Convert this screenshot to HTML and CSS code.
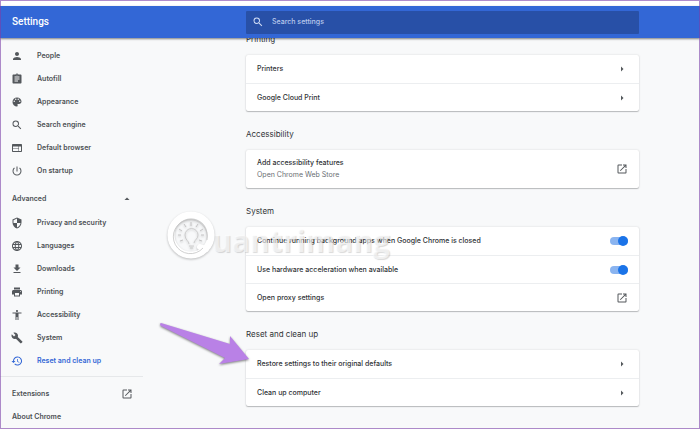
FILE: index.html
```html
<!DOCTYPE html>
<html lang="en">
<head>
    <meta charset="UTF-8">
    <meta name="viewport" content="width=device-width, initial-scale=1.0">
    <title>Settings</title>
    <link rel="stylesheet" href="styles.css">
</head>
<body>
    <svg class="sprite" aria-hidden="true">
        <symbol id="search" viewBox="0 0 24 24"><path d="M15.5 14h-.79l-.28-.27A6.47 6.47 0 0 0 16 9.5 6.5 6.5 0 1 0 9.5 16c1.61 0 3.09-.59 4.23-1.57l.27.28v.79l5 4.99L20.49 19l-4.99-5zm-6 0C7.01 14 5 11.99 5 9.5S7.01 5 9.5 5 14 7.01 14 9.5 11.99 14 9.5 14z"/></symbol>
        <symbol id="open" viewBox="0 0 24 24"><path d="M19 19H5V5h7V3H5a2 2 0 0 0-2 2v14a2 2 0 0 0 2 2h14c1.1 0 2-.9 2-2v-7h-2v7zM14 3v2h3.59l-9.83 9.83 1.41 1.41L19 6.41V10h2V3h-7z"/></symbol>
        <symbol id="right" viewBox="0 0 24 24"><path d="M10 7v10l5-5z"/></symbol>
    </svg>

    <header class="toolbar">
        <h1 class="title">Settings</h1>
        <label class="search">
            <svg class="icon"><use href="#search"/></svg>
            <input type="search" placeholder="Search settings" aria-label="Search settings">
        </label>
    </header>

    <div class="page">
        <nav class="sidebar">
            <a class="item" href="#people"><svg class="icon" viewBox="0 0 24 24"><path d="M12 12c2.21 0 4-1.79 4-4s-1.79-4-4-4-4 1.79-4 4 1.79 4 4 4zm0 2c-2.67 0-8 1.34-8 4v2h16v-2c0-2.66-5.33-4-8-4z"/></svg>People</a>
            <a class="item" href="#autofill"><svg class="icon" viewBox="0 0 24 24"><path d="M19 3h-4.18C14.4 1.84 13.3 1 12 1s-2.4.84-2.82 2H5c-1.1 0-2 .9-2 2v14c0 1.1.9 2 2 2h14c1.1 0 2-.9 2-2V5c0-1.1-.9-2-2-2zm-7 0c.55 0 1 .45 1 1s-.45 1-1 1-1-.45-1-1 .45-1 1-1zm2 14H7v-2h7v2zm3-4H7v-2h10v2zm0-4H7V7h10v2z"/></svg>Autofill</a>
            <a class="item" href="#appearance"><svg class="icon" viewBox="0 0 24 24"><path d="M12 3a9 9 0 0 0 0 18c.83 0 1.5-.67 1.5-1.5 0-.39-.15-.74-.39-1.01-.23-.26-.38-.61-.38-.99 0-.83.67-1.5 1.5-1.5H16c2.76 0 5-2.24 5-5 0-4.42-4.03-8-9-8zm-5.5 9c-.83 0-1.5-.67-1.5-1.5S5.67 9 6.5 9 8 9.67 8 10.5 7.33 12 6.5 12zm3-4C8.67 8 8 7.33 8 6.5S8.67 5 9.5 5s1.5.67 1.5 1.5S10.33 8 9.5 8zm5 0c-.83 0-1.5-.67-1.5-1.5S13.67 5 14.5 5s1.5.67 1.5 1.5S15.33 8 14.5 8zm3 4c-.83 0-1.5-.67-1.5-1.5S16.67 9 17.5 9s1.5.67 1.5 1.5-.67 1.5-1.5 1.5z"/></svg>Appearance</a>
            <a class="item" href="#engine"><svg class="icon"><use href="#search"/></svg>Search engine</a>
            <a class="item" href="#browser"><svg class="icon" viewBox="0 0 24 24"><path d="M20 4H4c-1.1 0-2 .9-2 2v12c0 1.1.9 2 2 2h16c1.1 0 2-.9 2-2V6c0-1.1-.9-2-2-2zm-5 14H4v-4h11v4zm0-5H4V9h11v4zm5 5h-4V9h4v9z"/></svg>Default browser</a>
            <a class="item" href="#startup"><svg class="icon" viewBox="0 0 24 24"><path d="M13 3h-2v10h2V3zm4.83 2.17l-1.42 1.42A6.92 6.92 0 0 1 19 12a7 7 0 1 1-11.42-5.42L6.17 5.17A8.93 8.93 0 0 0 3 12a9 9 0 0 0 18 0 8.93 8.93 0 0 0-3.17-6.83z"/></svg>On startup</a>

            <button class="advanced" type="button">Advanced <svg class="icon" viewBox="0 0 24 24"><path d="M7 14l5-5 5 5z"/></svg></button>

            <a class="item" href="#privacy"><svg class="icon" viewBox="0 0 24 24"><path d="M12 1L3 5v6c0 5.55 3.84 10.74 9 12 5.16-1.26 9-6.45 9-12V5l-9-4zm0 10.99h7c-.53 4.12-3.28 7.79-7 8.94V12H5V6.3l7-3.11v8.8z"/></svg>Privacy and security</a>
            <a class="item" href="#languages"><svg class="icon" viewBox="0 0 24 24"><path d="M11.99 2C6.47 2 2 6.48 2 12s4.47 10 9.99 10C17.52 22 22 17.52 22 12S17.52 2 11.99 2zm6.93 6h-2.95a15.65 15.65 0 0 0-1.38-3.56A8.03 8.03 0 0 1 18.92 8zM12 4.04c.83 1.2 1.48 2.53 1.91 3.96h-3.82c.43-1.43 1.08-2.76 1.91-3.96zM4.26 14C4.1 13.36 4 12.69 4 12s.1-1.36.26-2h3.38c-.08.66-.14 1.32-.14 2s.06 1.34.14 2H4.26zm.82 2h2.95c.32 1.25.78 2.45 1.38 3.56A7.99 7.99 0 0 1 5.08 16zm2.95-8H5.08a7.99 7.99 0 0 1 4.33-3.56A15.65 15.65 0 0 0 8.03 8zM12 19.96c-.83-1.2-1.48-2.53-1.91-3.96h3.82c-.43 1.43-1.08 2.76-1.91 3.96zM14.34 14H9.66c-.09-.66-.16-1.32-.16-2s.07-1.35.16-2h4.68c.09.65.16 1.32.16 2s-.07 1.34-.16 2zm.25 5.56c.6-1.11 1.06-2.31 1.38-3.56h2.95a8.03 8.03 0 0 1-4.33 3.56zM16.36 14c.08-.66.14-1.32.14-2s-.06-1.34-.14-2h3.38c.16.64.26 1.31.26 2s-.1 1.36-.26 2h-3.38z"/></svg>Languages</a>
            <a class="item" href="#downloads"><svg class="icon" viewBox="0 0 24 24"><path d="M19 9h-4V3H9v6H5l7 7 7-7zM5 18v2h14v-2H5z"/></svg>Downloads</a>
            <a class="item" href="#printing"><svg class="icon" viewBox="0 0 24 24"><path d="M19 8H5c-1.66 0-3 1.34-3 3v6h4v4h12v-4h4v-6c0-1.66-1.34-3-3-3zm-3 11H8v-5h8v5zm3-7c-.55 0-1-.45-1-1s.45-1 1-1 1 .45 1 1-.45 1-1 1zm-1-9H6v4h12V3z"/></svg>Printing</a>
            <a class="item" href="#accessibility"><svg class="icon" viewBox="0 0 24 24"><path d="M12 2c1.1 0 2 .9 2 2s-.9 2-2 2-2-.9-2-2 .9-2 2-2zm9 7h-6v13h-2v-6h-2v6H9V9H3V7h18v2z"/></svg>Accessibility</a>
            <a class="item" href="#system"><svg class="icon" viewBox="0 0 24 24"><path d="M22.7 19l-9.1-9.1c.9-2.3.4-5-1.5-6.9-2-2-5-2.4-7.4-1.3L9 6 6 9 1.6 4.7C.4 7.1.9 10.1 2.9 12.1c1.9 1.9 4.6 2.4 6.9 1.5l9.1 9.1c.4.4 1 .4 1.4 0l2.3-2.3c.5-.4.5-1.1.1-1.4z"/></svg>System</a>
            <a class="item selected" href="#reset"><svg class="icon" viewBox="0 0 24 24"><path d="M13 3a9 9 0 0 0-9 9H1l3.890 3.890.07.14L9 12H6a7 7 0 1 1 2.06 4.94l-1.42 1.42A9 9 0 1 0 13 3zm-1 5v5l4.28 2.54.72-1.21-3.5-2.08V8H12z"/></svg>Reset and clean up</a>

            <div class="footer-links">
                <a class="item" href="#extensions">Extensions <svg class="icon"><use href="#open"/></svg></a>
                <a class="item" href="#about">About Chrome</a>
            </div>
        </nav>

        <main class="content">
            <section>
                <h2>Printing</h2>
                <div class="card">
                    <button class="row" type="button">Printers <svg class="icon"><use href="#right"/></svg></button>
                    <button class="row" type="button">Google Cloud Print <svg class="icon"><use href="#right"/></svg></button>
                </div>
            </section>

            <section>
                <h2>Accessibility</h2>
                <div class="card">
                    <a class="row two-line" href="#store">
                        <span>Add accessibility features<small>Open Chrome Web Store</small></span>
                        <svg class="icon"><use href="#open"/></svg>
                    </a>
                </div>
            </section>

            <section>
                <h2>System</h2>
                <div class="card">
                    <label class="row">Continue running background apps when Google Chrome is closed <input class="toggle" type="checkbox" checked></label>
                    <label class="row">Use hardware acceleration when available <input class="toggle" type="checkbox" checked></label>
                    <a class="row" href="#proxy">Open proxy settings <svg class="icon"><use href="#open"/></svg></a>
                </div>
            </section>

            <section>
                <h2>Reset and clean up</h2>
                <div class="card">
                    <button class="row" type="button">Restore settings to their original defaults <svg class="icon"><use href="#right"/></svg></button>
                    <button class="row" type="button">Clean up computer <svg class="icon"><use href="#right"/></svg></button>
                </div>
            </section>
        </main>
    </div>

    <!-- watermark -->
    <div class="watermark" aria-label="Quantrimang">
        <svg class="bulb" viewBox="0 0 50 50">
            <circle cx="25" cy="25" r="20" fill="none" stroke="#fff" stroke-width="7"/>
            <path d="M34 37l6 2" stroke="#fff" stroke-width="6" stroke-linecap="round"/>
            <g fill="none" stroke="#c4c4c4">
                <path d="M37 38a17 17 0 1 1 4-8" stroke-width=".8"/>
                <path d="M23 34c0-3-4-4-4-9a6 6 0 0 1 13 0c0 4-3 4-4 8M23 36h5M24 38h3" stroke-width=".8"/>
                <path d="M25 12v4M18 14l2 3M32 14l-2 3M13 19l3 2M37 19l-3 2M12 25h3M38 25h-3M14 31l3-1M36 31l-3-1"/>
            </g>
        </svg>
        <span>uantrimang</span>
    </div>

    <!-- arrow pointing at the restore row -->
    <svg class="pointer" viewBox="0 0 92 46" aria-hidden="true">
        <path d="M1 3L70 24 70 16 89 39 59 44 65 38 1 6Q-1 4 1 3z"/>
    </svg>
</body>
</html>
```

FILE: styles.css
```css
* {
    box-sizing: border-box;
}
body {
    margin: 0;
    padding-top: 6px;
    height: 100vh;
    overflow: hidden;
    background: #fff;
    color: #303336;
    font: 500 7px/12px Inter, Roboto, sans-serif;
}
/* thin frame round the window */
body::after {
    content: "";
    position: fixed;
    inset: 0;
    border: 1px solid rgba(123, 63, 168, 0.6);
    pointer-events: none;
    z-index: 5;
}
.sprite {
    position: absolute;
    width: 0;
    height: 0;
}
a {
    color: inherit;
    text-decoration: none;
}
button {
    border: 0;
    background: none;
    color: inherit;
    font: inherit;
    text-align: left;
}
.icon {
    width: 12px;
    height: 12px;
    flex: none;
    fill: #54585c;
}

.toolbar,
.page {
    display: grid;
    grid-template-columns: 246px minmax(0, 393px) 1fr;
}
.toolbar {
    position: relative;
    z-index: 2;
    height: 32px;
    align-items: center;
    background: #3367d6;
    box-shadow: 0 1px 2px rgba(0, 0, 0, 0.5);
}
.title {
    margin: 0;
    padding-left: 12px;
    color: #fff;
    font: 500 10px/12px Roboto, sans-serif;
}
.search {
    display: flex;
    align-items: center;
    gap: 8px;
    height: 23px;
    padding: 0 6px;
    border-radius: 1px;
    background: #2850a7;
}
.search .icon {
    fill: #d0dcf5;
}
.search input {
    flex: 1;
    padding: 0;
    border: 0;
    outline: 0;
    background: none;
    color: #fff;
    font: inherit;
}
.search input::placeholder {
    color: #b9c9ec;
}

.page {
    min-height: calc(100vh - 38px);
    background: #f8f9fa;
}
.sidebar {
    width: 143px;
    padding-top: 6px;
    color: #4c5054;
    font-weight: 600;
}
.item {
    display: flex;
    align-items: center;
    gap: 14px;
    height: 23px;
    padding-left: 11px;
}
.selected,
.selected .icon {
    color: #3367d6;
    fill: #3367d6;
}
.advanced {
    display: flex;
    align-items: center;
    justify-content: space-between;
    width: 100%;
    height: 25px;
    margin-top: 4px;
    padding: 0 10px 0 12px;
}
.footer-links {
    margin-top: 4px;
    padding-top: 5px;
    border-top: 1px solid #e6e8ea;
}
.footer-links .item {
    justify-content: space-between;
    padding: 0 10px 0 12px;
}

/* scrolled so the first heading is partly under the toolbar */
.content {
    margin-top: -22px;
}
h2 {
    margin: 0;
    padding: 17px 0 10px;
    font-size: 8px;
    font-weight: 400;
    line-height: 12px;
}
.card {
    border-radius: 2px;
    background: #fff;
    box-shadow: 0 1px 1px rgba(60, 64, 67, 0.3), 0 0 2px rgba(60, 64, 67, 0.2);
}
.row {
    display: flex;
    align-items: center;
    justify-content: space-between;
    width: 100%;
    height: 28px;
    padding: 0 11px;
}
.row + .row {
    border-top: 1px solid #eceef0;
}
.two-line {
    height: 38px;
}
.row small {
    display: block;
    color: #696e73;
    font-size: 7px;
    font-weight: 400;
}
.toggle {
    position: relative;
    appearance: none;
    width: 18px;
    height: 8px;
    margin: 0;
    border-radius: 4px;
    background: #8ab4f0;
}
.toggle::after {
    content: "";
    position: absolute;
    top: -1px;
    right: 0;
    width: 10px;
    height: 10px;
    border-radius: 50%;
    background: #1a73e8;
}

.watermark {
    position: absolute;
    left: 166px;
    top: 210px;
    z-index: 3;
    display: flex;
    align-items: flex-start;
    color: rgba(255, 255, 255, 0.6);
    font: 700 30px/50px "Open Sans", sans-serif;
    text-shadow: 1px 1px 1px rgba(0, 0, 0, 0.15);
    pointer-events: none;
}
.watermark span {
    margin-left: -4px;
    padding-top: 6px;
}
.bulb {
    width: 50px;
    height: 50px;
    filter: drop-shadow(0 1px 1px rgba(0, 0, 0, 0.25));
}
.pointer {
    position: absolute;
    left: 160px;
    top: 320px;
    z-index: 3;
    width: 92px;
    height: 46px;
    fill: #b981e6;
    filter: drop-shadow(0 1px 1px rgba(0, 0, 0, 0.5));
    pointer-events: none;
}
```
